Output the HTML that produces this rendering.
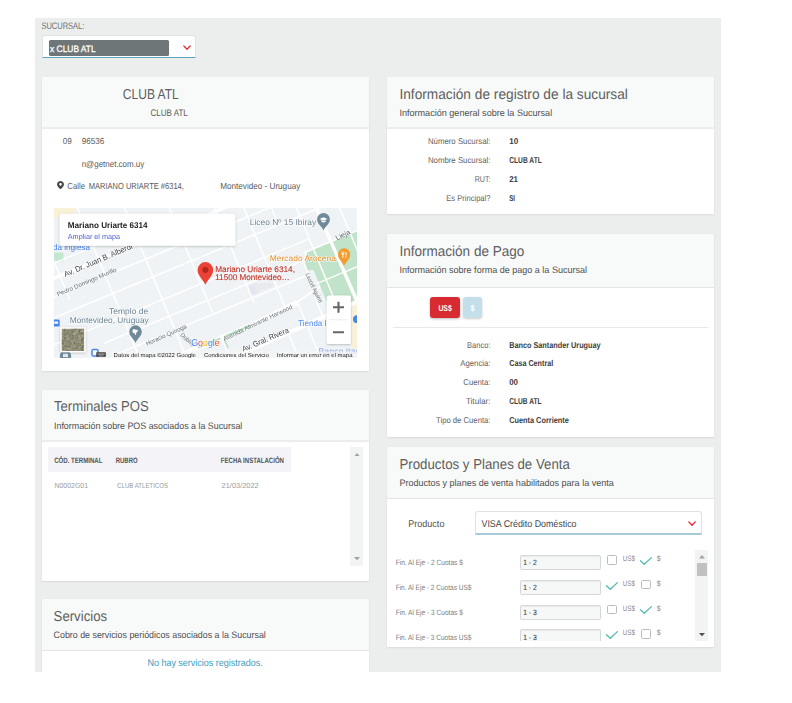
<!DOCTYPE html>
<html lang="es"><head><meta charset="utf-8"><title>Sucursal</title>
<style>
html,body{margin:0;padding:0;background:#fff;}
body{width:792px;height:703px;position:relative;overflow:hidden;font-family:"Liberation Sans",sans-serif;}
.bg{position:absolute;left:35px;top:18px;width:686px;height:654px;background:#eceeee;overflow:hidden;}
.abs,.card,.hd{position:absolute;}
.card{background:#fff;box-shadow:0 1px 1.5px rgba(0,0,0,.07),0 0 1px rgba(0,0,0,.05);}
.hd{left:0;top:0;right:0;background:#f8faf9;border-bottom:1px solid #e3e5e4;box-sizing:border-box;}
.hd.b2{border-bottom:2px solid #eceeed;}
.sel{position:absolute;background:#fff;border:1px solid #dfe3e3;border-bottom:1.5px solid #5aa5bd;border-radius:3px 3px 1px 1px;box-sizing:border-box;}
.inp{position:absolute;left:520px;width:81px;height:15px;background:#f6f8f8;border:1px solid #d4d8d8;border-radius:1.5px;box-sizing:border-box;box-shadow:inset 0 1px 1px rgba(0,0,0,.05);}
.cb{position:absolute;width:10px;height:9.6px;border:1px solid #bcbcbc;border-radius:1.5px;box-sizing:border-box;background:#fff;}

</style></head>
<body>
<div class="bg"></div>

<!-- sucursal select -->
<div class="sel" style="left:42px;top:35px;width:154px;height:23px;"></div>
<div class="abs" style="left:49px;top:40px;width:120px;height:16px;background:#6e7678;border-radius:1.5px;"></div>
<svg class="abs" style="left:182.5px;top:45.1px;" width="8" height="5.4" viewBox="0 0 8 5.4"><path d="M0.800 0.900 L4 4.300 L7.200 0.900" fill="none" stroke="#ea2733" stroke-width="1.35" stroke-linecap="round" stroke-linejoin="round"/></svg>

<!-- left card 1 -->
<div class="card" style="left:42px;top:77px;width:327px;height:294px;"><div class="hd b2" style="height:52px;"></div></div>
<svg class="abs" style="left:57.2px;top:181.2px;" width="7" height="8.2" viewBox="0 0 14 16.4"><path d="M7 0C3.1 0 0 3 0 6.8c0 4.6 7 9.6 7 9.6s7-5 7-9.6C14 3 10.900 0 7 0zm0 9.300a2.600 2.600 0 1 1 0-5.200 2.600 2.600 0 0 1 0 5.200z" fill="#4a4a4a"/></svg>
<svg class="abs" style="left:54px;top:208px;opacity:.999;" width="303" height="150" viewBox="0 0 303 150" font-family="Liberation Sans, sans-serif" text-rendering="geometricPrecision">
<defs><clipPath id="mc"><rect x="0" y="0" width="303" height="150"/></clipPath><filter id="sh" x="-20%" y="-20%" width="140%" height="150%"><feDropShadow dx="0" dy="0.6" stdDeviation="0.9" flood-color="#000" flood-opacity="0.28"/></filter><filter id="nz" x="0" y="0" width="100%" height="100%" color-interpolation-filters="sRGB"><feTurbulence type="fractalNoise" baseFrequency="0.4" numOctaves="3" seed="7" result="t"/><feColorMatrix in="t" type="matrix" values="0 0 0 0 0.36  0 0 0 0 0.35  0 0 0 0 0.27  0.9 0.9 0.9 0 -1.0" result="m"/><feComposite in="m" in2="SourceGraphic" operator="in"/></filter></defs>
<g clip-path="url(#mc)">
<rect width="303" height="150" fill="#f0f3f5"/>
<polygon points="0,0 21,0 21,4 14,9.6 0,9.6" fill="#f9f1d8"/>
<rect x="0" y="44.5" width="9.5" height="9" fill="#c5e7cf"/>
<polygon points="252,43.7 303,22.7 303,94 272.5,93 259.5,62 252.5,62.3 250,55" fill="#c0e3ca"/>
<polygon points="193.500,78.500 201,75.300 205,84.500 197.500,87.800" fill="#e5e6f0"/>
<polygon points="200,75 219,75 219.500,79 202,83.500" fill="#e9eaf0"/>
<rect x="297.5" y="96" width="6" height="44" fill="#faf2d8"/>
<line x1="-5.0" y1="57.3" x2="60.0" y2="30.3" stroke="#fff" stroke-width="1.5"/>
<line x1="-5.0" y1="72.4" x2="175.0" y2="-2.1" stroke="#fff" stroke-width="3.2"/>
<line x1="-5.0" y1="91.2" x2="232.0" y2="-7.0" stroke="#fff" stroke-width="1.5"/>
<line x1="-5.0" y1="111.9" x2="272.0" y2="-2.8" stroke="#fff" stroke-width="1.5"/>
<line x1="-5.0" y1="138.7" x2="254.0" y2="31.4" stroke="#fff" stroke-width="1.5"/>
<line x1="50.0" y1="135.2" x2="252.0" y2="51.5" stroke="#fff" stroke-width="1.5"/>
<line x1="60.0" y1="147.2" x2="252.0" y2="67.7" stroke="#fff" stroke-width="1.5"/>
<line x1="250.0" y1="44.7" x2="310.0" y2="19.9" stroke="#fff" stroke-width="1.5"/>
<line x1="262.0" y1="75.8" x2="310.0" y2="55.9" stroke="#fff" stroke-width="1.3"/>
<line x1="-24.3" y1="-5.0" x2="15.9" y2="92.0" stroke="#fff" stroke-width="1.5"/>
<line x1="21.3" y1="-5.0" x2="87.6" y2="155.0" stroke="#fff" stroke-width="1.5"/>
<line x1="68.3" y1="-5.0" x2="134.6" y2="155.0" stroke="#fff" stroke-width="1.5"/>
<line x1="113.2" y1="-5.0" x2="158.4" y2="104.0" stroke="#fff" stroke-width="1.5"/>
<line x1="158.7" y1="-5.0" x2="200.1" y2="95.0" stroke="#fff" stroke-width="1.5"/>
<line x1="187.9" y1="-5.0" x2="231.4" y2="100.0" stroke="#fff" stroke-width="1.5"/>
<line x1="243.9" y1="95.0" x2="268.8" y2="155.0" stroke="#fff" stroke-width="1.5"/>
<line x1="215.5" y1="-5.0" x2="222.1" y2="11.0" stroke="#fff" stroke-width="1.5"/>
<line x1="240.4" y1="-5.0" x2="280.6" y2="92.0" stroke="#fff" stroke-width="1.5"/>
<line x1="283.7" y1="-5.0" x2="307.3" y2="52.0" stroke="#fff" stroke-width="1.5"/>
<line x1="234.3" y1="125.0" x2="246.7" y2="155.0" stroke="#fff" stroke-width="1.5"/>
<polyline points="252.5,43.0 250.3,55.0 264.0,97.0 270.0,112.0" fill="none" stroke="#fff" stroke-width="1.5" stroke-linejoin="round"/>
<line x1="261.3" y1="-2" x2="302.5" y2="92" stroke="#fff" stroke-width="3.4"/>
<line x1="170" y1="154" x2="310" y2="90.600" stroke="#fff" stroke-width="4.2"/>
<polyline points="112.0,153.5 141.7,140.7 200.0,116.0 243.0,94.5" fill="none" stroke="#fff" stroke-width="4.8" stroke-linejoin="round"/>
<polyline points="241.0,95.5 266.0,78.5" fill="none" stroke="#fff" stroke-width="1.8" stroke-linejoin="round"/>
<polyline points="144.0,139.7 166.5,130.2" fill="none" stroke="#bde3c8" stroke-width="2.2" stroke-linejoin="round"/>
<polyline points="171.0,128.3 196.5,117.5" fill="none" stroke="#bde3c8" stroke-width="2.2" stroke-linejoin="round"/>
<polyline points="170.5,131.0 174.0,140.0" fill="none" stroke="#bde3c8" stroke-width="1.8" stroke-linejoin="round"/>
<polyline points="166.5,127.0 176.0,151.0" fill="none" stroke="#fff" stroke-width="1.1" stroke-linejoin="round"/>
<text x="11.3" y="69.0" font-size="7.9" fill="#3f4347" textLength="73.5" lengthAdjust="spacingAndGlyphs" transform="rotate(-23 11.3 69.0)" stroke="#fff" stroke-width="1.3" stroke-opacity=".75" paint-order="stroke" stroke-linejoin="round">Av. Dr. Juan B. Alberdi</text>
<text x="4.0" y="88.4" font-size="6.1" fill="#6c7176" textLength="64" lengthAdjust="spacingAndGlyphs" transform="rotate(-23 4.0 88.4)">Pedro Domingo Murillo</text>
<text x="93.0" y="137.7" font-size="6.1" fill="#6c7176" textLength="44" lengthAdjust="spacingAndGlyphs" transform="rotate(-24 93.0 137.7)">Horacio Quiroga</text>
<text x="126.0" y="127.5" font-size="6.1" fill="#6c7176" textLength="16" lengthAdjust="spacingAndGlyphs" transform="rotate(42 126.0 127.5)">Dublín</text>
<text x="170.2" y="133.0" font-size="6.1" fill="#6c7176" textLength="76" lengthAdjust="spacingAndGlyphs" transform="rotate(-25.5 170.2 133.0)">Avenida Almirante Harwood</text>
<text x="189.4" y="143.8" font-size="7.9" fill="#3f4347" textLength="50" lengthAdjust="spacingAndGlyphs" transform="rotate(-23 189.4 143.8)" stroke="#fff" stroke-width="1.3" stroke-opacity=".75" paint-order="stroke" stroke-linejoin="round">Av. Gral. Rivera</text>
<text x="251.2" y="66.5" font-size="6.2" fill="#6a7075" textLength="32" lengthAdjust="spacingAndGlyphs" transform="rotate(64.3 251.2 66.5)">Leonel Aguirre</text>
<text x="283.0" y="32.6" font-size="7" fill="#62676c" textLength="15.5" lengthAdjust="spacingAndGlyphs" transform="rotate(-27 283.0 32.6)">Lieja</text>
<text x="-1.0" y="42.3" font-size="8.3" fill="#4a86e8" textLength="37" lengthAdjust="spacingAndGlyphs">da inglesa</text>
<text x="195.8" y="17.3" font-size="8.3" fill="#6b8392" textLength="66.3" lengthAdjust="spacingAndGlyphs" stroke="#fff" stroke-width="1.3" stroke-opacity=".75" paint-order="stroke" stroke-linejoin="round">Liceo Nº 15 Ibiray</text>
<path d="M269.50 22.40 C267.60 17.88 263.15 16.43 263.15 11.35 A6.35 6.35 0 1 1 275.85 11.35 C275.85 16.43 271.40 17.88 269.50 22.40z" fill="#708a99"/><path d="M265.6 11 L269.5 9.2 L273.4 11 L269.5 12.800z M267.300 12.300 v1.500 q2.200 1.400 4.400 0 v-1.500 l-2.200 1z" fill="#fff"/>
<text x="215.8" y="52.5" font-size="8.2" fill="#e8912d" textLength="66.1" lengthAdjust="spacingAndGlyphs" stroke="#fff" stroke-width="1.3" stroke-opacity=".75" paint-order="stroke" stroke-linejoin="round">Mercado Arocena</text>
<path d="M290.10 57.90 C288.27 53.32 284.00 51.28 284.00 46.40 A6.10 6.10 0 1 1 296.20 46.40 C296.20 51.28 291.93 53.32 290.10 57.90z" fill="#f39c2f"/><path d="M287.600 43.500 v2.200 q0 1 .9 1.100 v3.200 h.8 v-3.200 q.9 -.1 .9 -1.100 v-2.200 h-.5 v2 h-.55 v-2 h-.5 v2 h-.55 v-2z M291.500 43.500 q1.200 .6 1.200 2.600 v.9 h-.5 v3 h-.7z" fill="#fff"/>
<text x="74.6" y="106.3" font-size="8.3" fill="#6b8392" textLength="39.1" lengthAdjust="spacingAndGlyphs" text-anchor="middle" stroke="#fff" stroke-width="1.3" stroke-opacity=".75" paint-order="stroke" stroke-linejoin="round">Templo de</text>
<text x="15.8" y="114.5" font-size="8.3" fill="#6b8392" textLength="78.9" lengthAdjust="spacingAndGlyphs" stroke="#fff" stroke-width="1.3" stroke-opacity=".75" paint-order="stroke" stroke-linejoin="round">Montevideo, Uruguay</text>
<path d="M81.50 135.00 C79.61 130.40 75.20 128.64 75.20 123.60 A6.30 6.30 0 1 1 87.80 123.60 C87.80 128.64 83.39 130.40 81.50 135.00z" fill="#708a99"/><path d="M78.500 121.800 l2.200 -.9 l.6 .9 l2.500 .300 l.2 1.100 l-1.200 .3 l.3 1 l-1.200 .2 l.3 2 l-1.100 .2 l-.6 -2.100 l-1.700 .5z" fill="#fff"/>
<text x="244.2" y="117.9" font-size="8.2" fill="#4a86e8" textLength="52" lengthAdjust="spacingAndGlyphs" stroke="#fff" stroke-width="1.3" stroke-opacity=".75" paint-order="stroke" stroke-linejoin="round">Tienda Inglesa</text>
<text x="264.5" y="145.5" font-size="8.2" fill="#93a9e8" textLength="42" lengthAdjust="spacingAndGlyphs">Banco Itaú</text>
<circle cx="302.9" cy="111.200" r="3.9" fill="#4a86e8"/>
<rect x="-1" y="111.6" width="6.700" height="7" rx="1.300" fill="#4a86e8"/><rect x="0.3" y="113.500" width="3.800" height="2.200" rx=".5" fill="#fff"/>
<circle cx="11.500" cy="148" r="5.700" fill="#708a99"/><rect x="9" y="145.600" width="5" height="3.500" fill="#dfe7ec"/>
<rect x="38" y="141.400" width="6" height="6.500" rx="1.300" fill="#fff" stroke="#4a86e8" stroke-width="1.500"/>
<path d="M151.40 76.70 C149.06 70.82 143.60 68.14 143.60 61.90 A7.80 7.80 0 1 1 159.20 61.90 C159.20 68.14 153.74 70.82 151.40 76.70z" fill="#ea4335"/><circle cx="151.4" cy="61.900" r="3" fill="#b3261e"/>
<text x="161.2" y="64.1" font-size="8.2" fill="#c8352b" textLength="79.8" lengthAdjust="spacingAndGlyphs" stroke="#c8352b" stroke-width="0.12">Mariano Uriarte 6314,</text>
<text x="161.2" y="72.1" font-size="8.2" fill="#c8352b" textLength="74.5" lengthAdjust="spacingAndGlyphs" stroke="#c8352b" stroke-width="0.12">11500 Montevideo…</text>
<rect x="5.7" y="5.7" width="175.7" height="32.1" rx="1" fill="#fff" filter="url(#sh)"/>
<text x="13.8" y="19.9" font-size="8.3" fill="#202124" font-weight="700" textLength="79.8" lengthAdjust="spacingAndGlyphs">Mariano Uriarte 6314</text>
<text x="13.8" y="30.7" font-size="7.3" fill="#4f5fd0" textLength="52.3" lengthAdjust="spacingAndGlyphs">Ampliar el mapa</text>
<text x="137.2" y="137.8" font-size="10" textLength="28.5" lengthAdjust="spacingAndGlyphs" stroke="#fff" stroke-width="0.9" stroke-linejoin="round" fill="#fff">Google</text>
<text x="137.2" y="137.8" font-size="10" textLength="28.5" lengthAdjust="spacingAndGlyphs"><tspan fill="#4285f4">G</tspan><tspan fill="#ea4335">o</tspan><tspan fill="#fbbc05">o</tspan><tspan fill="#4285f4">g</tspan><tspan fill="#34a853">l</tspan><tspan fill="#ea4335">e</tspan></text>
<rect x="56" y="143.500" width="247" height="6.500" fill="#f5f5f5" fill-opacity="0.72"/>
<rect x="42.3" y="144.200" width="9.500" height="4.600" rx=".6" fill="#333"/><path d="M43.300 145.300h7.500M43.300 146.500h7.500M44.500 147.700h5" stroke="#ddd" stroke-width=".5"/>
<text x="59.6" y="148.5" font-size="5.7" fill="#222" textLength="82.3" lengthAdjust="spacingAndGlyphs">Datos del mapa ©2022 Google</text>
<text x="150.0" y="148.5" font-size="5.7" fill="#222" textLength="64.7" lengthAdjust="spacingAndGlyphs">Condiciones del Servicio</text>
<text x="222.8" y="148.5" font-size="5.7" fill="#222" textLength="75.7" lengthAdjust="spacingAndGlyphs">Informar un error en el mapa</text>
<rect x="6.3" y="119.2" width="25.3" height="25" rx="1.3" fill="#fff" filter="url(#sh)"/>
<rect x="7.8" y="120.700" width="22.3" height="22.2" rx=".7" fill="#a3a08a"/>
<rect x="7.8" y="120.700" width="22.3" height="22.2" rx=".7" fill="#fff" filter="url(#nz)" opacity=".85"/>
<rect x="272.8" y="87.4" width="24.1" height="48.7" rx="1.5" fill="#fff" filter="url(#sh)"/>
<rect x="275.5" y="111.5" width="18.2" height="0.7" fill="#e6e6e6"/>
<path d="M279 99.3h11M284.500 93.800v11M279 124.200h11" stroke="#666" stroke-width="2.1" fill="none"/>
</g></svg>

<!-- POS card -->
<div class="card" style="left:42px;top:390px;width:327px;height:191px;"><div class="hd b2" style="height:52px;"></div></div>
<div class="abs" style="left:48px;top:447px;width:243px;height:25px;background:#f3f3f8;"></div>
<div class="abs" style="left:350px;top:447px;width:13px;height:118.5px;background:#f2f4f3;"></div>
<svg class="abs" style="left:353.7px;top:452.6px;" width="6" height="3.4" viewBox="0 0 6 3.4"><path d="M0 3.4 L3 0 L6 3.400z" fill="#a3a3a3"/></svg>
<svg class="abs" style="left:353.7px;top:556.800px;" width="6" height="3.4" viewBox="0 0 6 3.4"><path d="M0 0 L3 3.4 L6 0z" fill="#a3a3a3"/></svg>

<!-- Servicios card -->
<div class="card" style="left:42px;top:599px;width:327px;height:110px;"><div class="hd" style="height:52px;"></div></div>

<!-- right card 1 -->
<div class="card" style="left:387px;top:77px;width:327px;height:137px;"><div class="hd b2" style="height:52px;"></div></div>

<!-- right card 2 -->
<div class="card" style="left:387px;top:234px;width:327px;height:203px;"><div class="hd" style="height:54px;"></div></div>
<div class="abs" style="left:430px;top:297px;width:30px;height:21px;background:#d72a31;border-radius:3px;box-shadow:0 1px 2.500px rgba(0,0,0,.28);"></div>
<div class="abs" style="left:463px;top:297px;width:19px;height:21px;background:#c4dfea;border-radius:3px;box-shadow:0 1px 2.500px rgba(0,0,0,.2);"></div>
<div class="abs" style="left:393px;top:327px;width:315px;height:1px;background:#e8eaea;"></div>

<!-- right card 3 -->
<div class="card" style="left:387px;top:447px;width:327px;height:200px;"><div class="hd" style="height:52px;"></div></div>
<div class="sel" style="left:475px;top:511px;width:227px;height:24px;border-bottom:2px solid #a6cad9;"></div>
<svg class="abs" style="left:688.2px;top:521px;" width="8" height="5.4" viewBox="0 0 8 5.4"><path d="M0.800 0.900 L4 4.300 L7.200 0.900" fill="none" stroke="#ea2733" stroke-width="1.35" stroke-linecap="round" stroke-linejoin="round"/></svg>
<div class="abs" style="left:0;top:0;width:792px;height:641px;overflow:hidden;"><div class="inp" style="top:555.1px;"></div>
<div class="cb" style="left:606.7px;top:555.2px;"></div>
<svg class="abs" style="left:640.2px;top:556.8px;" width="12" height="8" viewBox="0 0 12 8"><path d="M0.500 3.700 L4.300 7.300 L11.400 0.600" fill="none" stroke="#4fb8ad" stroke-width="1.2" stroke-linecap="round" stroke-linejoin="round"/></svg>
<div class="inp" style="top:579.8px;"></div>
<div class="cb" style="left:640.6px;top:579.9px;"></div>
<svg class="abs" style="left:606.4px;top:581.5px;" width="12" height="8" viewBox="0 0 12 8"><path d="M0.500 3.700 L4.300 7.300 L11.400 0.600" fill="none" stroke="#4fb8ad" stroke-width="1.2" stroke-linecap="round" stroke-linejoin="round"/></svg>
<div class="inp" style="top:604.6px;"></div>
<div class="cb" style="left:606.7px;top:604.7px;"></div>
<svg class="abs" style="left:640.2px;top:606.3px;" width="12" height="8" viewBox="0 0 12 8"><path d="M0.500 3.700 L4.300 7.300 L11.400 0.600" fill="none" stroke="#4fb8ad" stroke-width="1.2" stroke-linecap="round" stroke-linejoin="round"/></svg>
<div class="inp" style="top:629.3px;"></div>
<div class="cb" style="left:640.6px;top:629.4px;"></div>
<svg class="abs" style="left:606.4px;top:631.0px;" width="12" height="8" viewBox="0 0 12 8"><path d="M0.500 3.700 L4.300 7.300 L11.400 0.600" fill="none" stroke="#4fb8ad" stroke-width="1.2" stroke-linecap="round" stroke-linejoin="round"/></svg>
</div>
<!-- scrollbar 3 -->
<div class="abs" style="left:695px;top:550px;width:13px;height:91px;background:#f2f4f3;"></div>
<div class="abs" style="left:697px;top:563px;width:10px;height:13px;background:#c1c1c1;"></div>
<svg class="abs" style="left:698.700px;top:555.2px;" width="6" height="3.4" viewBox="0 0 6 3.4"><path d="M0 3.4 L3 0 L6 3.400z" fill="#a3a3a3"/></svg>
<svg class="abs" style="left:698.700px;top:632.5px;" width="6" height="3.4" viewBox="0 0 6 3.4"><path d="M0 0 L3 3.4 L6 0z" fill="#505050"/></svg>

<div class="abs" style="left:0;top:672px;width:792px;height:31px;background:#fff;"></div>
<svg class="abs" style="left:0;top:0;" width="792" height="703" viewBox="0 0 792 703" font-family="Liberation Sans, sans-serif" text-rendering="geometricPrecision">
<defs><clipPath id="rowclip"><rect x="380" y="540" width="340" height="101"/></clipPath></defs>
<text x="41.4" y="29" font-size="9.4" fill="#707070" textLength="43.0" lengthAdjust="spacingAndGlyphs">SUCURSAL:</text>
<text x="50.1" y="52" font-size="9.4" fill="#ffffff" textLength="45.5" lengthAdjust="spacingAndGlyphs" stroke="#fff" stroke-width="0.3">x CLUB ATL</text>
<text x="122.8" y="99" font-size="14.4" fill="#5e5e5e" textLength="56.0" lengthAdjust="spacingAndGlyphs">CLUB ATL</text>
<text x="150.5" y="116" font-size="9.5" fill="#5a5a5a" textLength="37.3" lengthAdjust="spacingAndGlyphs">CLUB ATL</text>
<text x="62.7" y="144" font-size="8.8" fill="#5a5a5a" textLength="9.1" lengthAdjust="spacingAndGlyphs">09</text>
<text x="81.7" y="144" font-size="8.8" fill="#5a5a5a" textLength="22.7" lengthAdjust="spacingAndGlyphs">96536</text>
<text x="81.7" y="167" font-size="8.8" fill="#5a5a5a" textLength="62.6" lengthAdjust="spacingAndGlyphs">n@getnet.com.uy</text>
<text x="67.3" y="189" font-size="8.8" fill="#5a5a5a" textLength="17.7" lengthAdjust="spacingAndGlyphs">Calle</text>
<text x="88.7" y="189" font-size="8.8" fill="#5a5a5a" textLength="95.2" lengthAdjust="spacingAndGlyphs">MARIANO URIARTE #6314,</text>
<text x="220.2" y="189" font-size="8.8" fill="#5a5a5a" textLength="80.1" lengthAdjust="spacingAndGlyphs">Montevideo - Uruguay</text>
<text x="54.0" y="411" font-size="14.4" fill="#5e5e5e" textLength="94.7" lengthAdjust="spacingAndGlyphs">Terminales POS</text>
<text x="54.0" y="429" font-size="9.4" fill="#4f4f4f" textLength="188.3" lengthAdjust="spacingAndGlyphs">Información sobre POS asociados a la Sucursal</text>
<text x="54.2" y="463" font-size="7.8" fill="#555555" font-weight="700" textLength="48.2" lengthAdjust="spacingAndGlyphs">CÓD. TERMINAL</text>
<text x="115.7" y="463" font-size="7.8" fill="#555555" font-weight="700" textLength="21.9" lengthAdjust="spacingAndGlyphs">RUBRO</text>
<text x="220.8" y="463" font-size="7.8" fill="#555555" font-weight="700" textLength="63.2" lengthAdjust="spacingAndGlyphs">FECHA INSTALACIÓN</text>
<text x="54.5" y="488" font-size="7.3" fill="#9c9c9c" textLength="33.5" lengthAdjust="spacingAndGlyphs">N0002G01</text>
<text x="117.1" y="488" font-size="7.3" fill="#9c9c9c" textLength="51.0" lengthAdjust="spacingAndGlyphs">CLUB ATLETICOS</text>
<text x="221.6" y="488" font-size="7.3" fill="#9c9c9c" textLength="37.1" lengthAdjust="spacingAndGlyphs">21/03/2022</text>
<text x="53.6" y="621" font-size="14.4" fill="#5e5e5e" textLength="53.5" lengthAdjust="spacingAndGlyphs">Servicios</text>
<text x="53.6" y="638" font-size="9.4" fill="#4f4f4f" textLength="212.2" lengthAdjust="spacingAndGlyphs">Cobro de servicios periódicos asociados a la Sucursal</text>
<text x="147.4" y="666" font-size="9.9" fill="#3a9cbc" textLength="115.4" lengthAdjust="spacingAndGlyphs">No hay servicios registrados.</text>
<text x="399.4" y="99" font-size="14.4" fill="#5e5e5e" textLength="228.5" lengthAdjust="spacingAndGlyphs">Información de registro de la sucursal</text>
<text x="399.4" y="116" font-size="9.4" fill="#4f4f4f" textLength="152.8" lengthAdjust="spacingAndGlyphs">Información general sobre la Sucursal</text>
<text x="427.9" y="144" font-size="8.5" fill="#626262" textLength="62.6" lengthAdjust="spacingAndGlyphs">Número Sucursal:</text>
<text x="509.2" y="144" font-size="8.5" fill="#3d3d3d" font-weight="700" textLength="9.0" lengthAdjust="spacingAndGlyphs">10</text>
<text x="427.9" y="163" font-size="8.5" fill="#626262" textLength="62.6" lengthAdjust="spacingAndGlyphs">Nombre Sucursal:</text>
<text x="509.2" y="163" font-size="8.5" fill="#3d3d3d" font-weight="700" textLength="32.6" lengthAdjust="spacingAndGlyphs">CLUB ATL</text>
<text x="474.7" y="182" font-size="8.5" fill="#626262" textLength="15.8" lengthAdjust="spacingAndGlyphs">RUT:</text>
<text x="509.2" y="182" font-size="8.5" fill="#3d3d3d" font-weight="700" textLength="8.8" lengthAdjust="spacingAndGlyphs">21</text>
<text x="446.2" y="201" font-size="8.5" fill="#626262" textLength="44.3" lengthAdjust="spacingAndGlyphs">Es Principal?</text>
<text x="509.2" y="201" font-size="8.5" fill="#3d3d3d" font-weight="700" textLength="5.8" lengthAdjust="spacingAndGlyphs">SI</text>
<text x="399.4" y="256" font-size="14.4" fill="#5e5e5e" textLength="125.0" lengthAdjust="spacingAndGlyphs">Información de Pago</text>
<text x="399.4" y="273" font-size="9.4" fill="#4f4f4f" textLength="187.6" lengthAdjust="spacingAndGlyphs">Información sobre forma de pago a la Sucursal</text>
<text x="438.4" y="311" font-size="8.4" fill="#ffffff" font-weight="700" textLength="13.4" lengthAdjust="spacingAndGlyphs">US$</text>
<text x="470.6" y="311" font-size="8.4" fill="#ffffff" font-weight="700" textLength="4.0" lengthAdjust="spacingAndGlyphs">$</text>
<text x="467.1" y="348" font-size="8.5" fill="#626262" textLength="23.4" lengthAdjust="spacingAndGlyphs">Banco:</text>
<text x="509.2" y="348" font-size="8.5" fill="#3d3d3d" font-weight="700" textLength="91.4" lengthAdjust="spacingAndGlyphs">Banco Santander Uruguay</text>
<text x="460.3" y="366" font-size="8.5" fill="#626262" textLength="30.2" lengthAdjust="spacingAndGlyphs">Agencia:</text>
<text x="509.2" y="366" font-size="8.5" fill="#3d3d3d" font-weight="700" textLength="44.0" lengthAdjust="spacingAndGlyphs">Casa Central</text>
<text x="463.3" y="385" font-size="8.5" fill="#626262" textLength="27.2" lengthAdjust="spacingAndGlyphs">Cuenta:</text>
<text x="509.2" y="385" font-size="8.5" fill="#3d3d3d" font-weight="700" textLength="8.8" lengthAdjust="spacingAndGlyphs">00</text>
<text x="465.9" y="404" font-size="8.5" fill="#626262" textLength="24.6" lengthAdjust="spacingAndGlyphs">Titular:</text>
<text x="509.2" y="404" font-size="8.5" fill="#3d3d3d" font-weight="700" textLength="32.3" lengthAdjust="spacingAndGlyphs">CLUB ATL</text>
<text x="436.0" y="423" font-size="8.5" fill="#626262" textLength="54.5" lengthAdjust="spacingAndGlyphs">Tipo de Cuenta:</text>
<text x="509.2" y="423" font-size="8.5" fill="#3d3d3d" font-weight="700" textLength="59.6" lengthAdjust="spacingAndGlyphs">Cuenta Corriente</text>
<text x="399.4" y="469" font-size="14.4" fill="#5e5e5e" textLength="170.5" lengthAdjust="spacingAndGlyphs">Productos y Planes de Venta</text>
<text x="399.4" y="486" font-size="9.4" fill="#4f4f4f" textLength="214.4" lengthAdjust="spacingAndGlyphs">Productos y planes de venta habilitados para la venta</text>
<text x="408.3" y="527" font-size="9.8" fill="#4f4f4f" textLength="36.1" lengthAdjust="spacingAndGlyphs">Producto</text>
<text x="481.5" y="527" font-size="9.8" fill="#444" textLength="95.0" lengthAdjust="spacingAndGlyphs">VISA Crédito Doméstico</text>
<text x="395.7" y="565" font-size="7.7" fill="#7c7c7c" textLength="67.1" lengthAdjust="spacingAndGlyphs">Fin. Al Eje - 2 Cuotas $</text>
<text x="523.2" y="565" font-size="7.6" fill="#404040" textLength="13.6" lengthAdjust="spacingAndGlyphs" stroke="#404040" stroke-width="0.1">1 - 2</text>
<text x="622.8" y="561" font-size="7.8" fill="#8a8a8a" textLength="12.2" lengthAdjust="spacingAndGlyphs">US$</text>
<text x="656.7" y="561" font-size="7.8" fill="#8a8a8a" textLength="3.9" lengthAdjust="spacingAndGlyphs">$</text>
<text x="395.7" y="590" font-size="7.7" fill="#7c7c7c" textLength="75.7" lengthAdjust="spacingAndGlyphs">Fin. Al Eje - 2 Cuotas US$</text>
<text x="523.2" y="590" font-size="7.6" fill="#404040" textLength="13.6" lengthAdjust="spacingAndGlyphs" stroke="#404040" stroke-width="0.1">1 - 2</text>
<text x="622.8" y="586" font-size="7.8" fill="#8a8a8a" textLength="12.2" lengthAdjust="spacingAndGlyphs">US$</text>
<text x="656.7" y="586" font-size="7.8" fill="#8a8a8a" textLength="3.9" lengthAdjust="spacingAndGlyphs">$</text>
<text x="395.7" y="615" font-size="7.7" fill="#7c7c7c" textLength="67.1" lengthAdjust="spacingAndGlyphs">Fin. Al Eje - 3 Cuotas $</text>
<text x="523.2" y="615" font-size="7.6" fill="#404040" textLength="13.6" lengthAdjust="spacingAndGlyphs" stroke="#404040" stroke-width="0.1">1 - 3</text>
<text x="622.8" y="611" font-size="7.8" fill="#8a8a8a" textLength="12.2" lengthAdjust="spacingAndGlyphs">US$</text>
<text x="656.7" y="611" font-size="7.8" fill="#8a8a8a" textLength="3.9" lengthAdjust="spacingAndGlyphs">$</text>
<text x="395.7" y="640" font-size="7.7" fill="#7c7c7c" textLength="75.7" lengthAdjust="spacingAndGlyphs" clip-path="url(#rowclip)">Fin. Al Eje - 3 Cuotas US$</text>
<text x="523.2" y="640" font-size="7.6" fill="#404040" textLength="13.6" lengthAdjust="spacingAndGlyphs" stroke="#404040" stroke-width="0.1" clip-path="url(#rowclip)">1 - 3</text>
<text x="622.8" y="635" font-size="7.8" fill="#8a8a8a" textLength="12.2" lengthAdjust="spacingAndGlyphs">US$</text>
<text x="656.7" y="635" font-size="7.8" fill="#8a8a8a" textLength="3.9" lengthAdjust="spacingAndGlyphs">$</text>
</svg>

</body></html>
